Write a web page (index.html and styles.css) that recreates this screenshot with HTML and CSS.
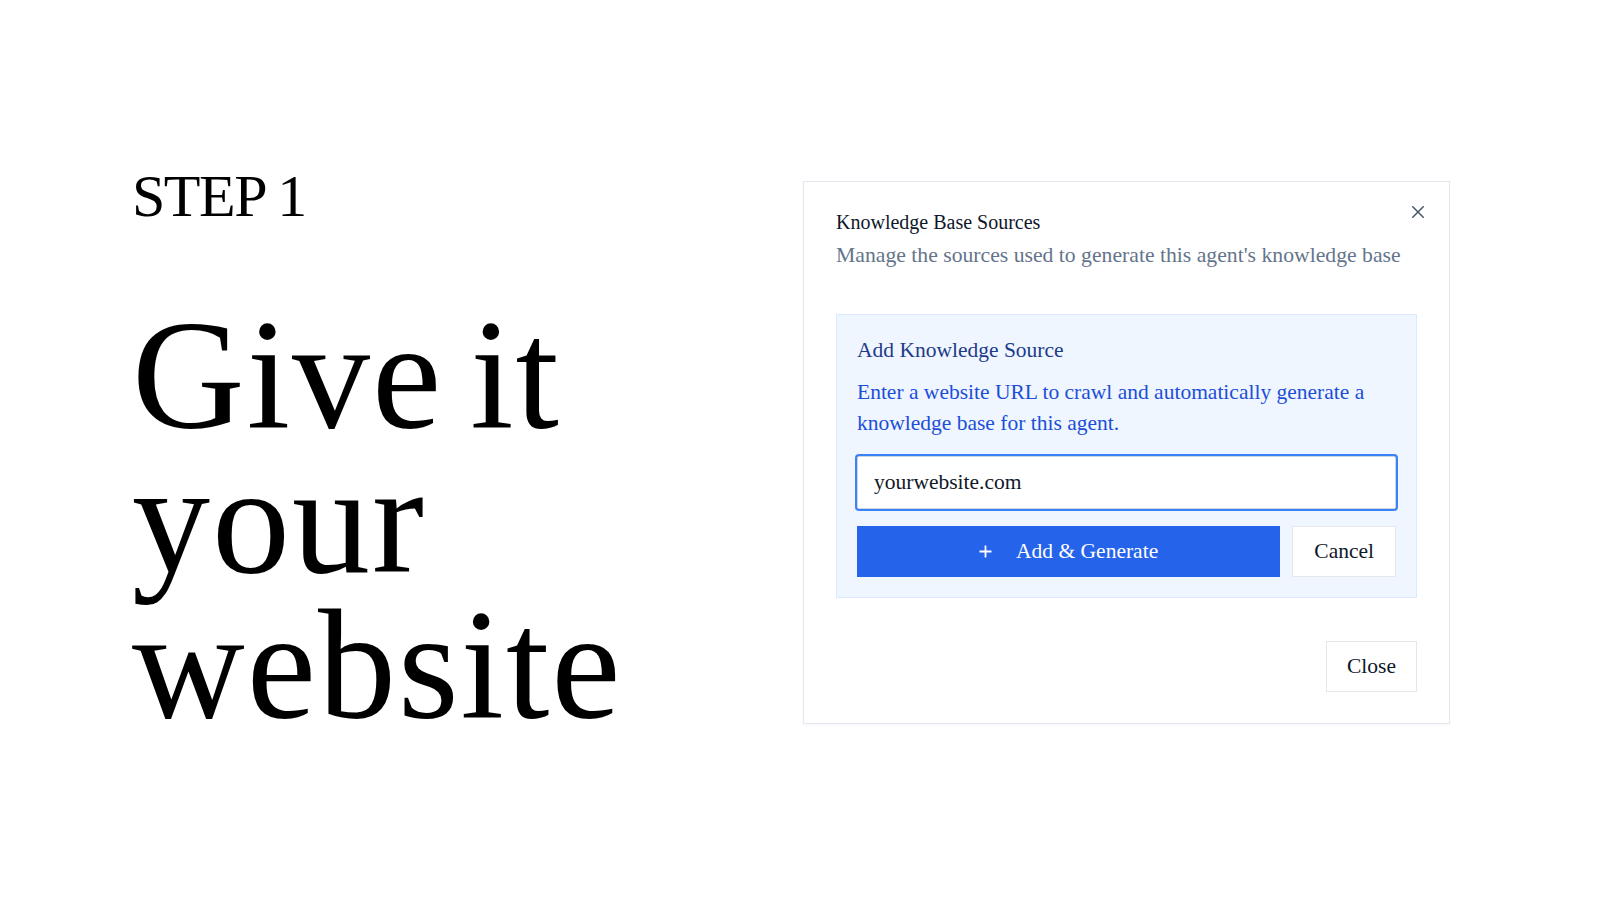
FILE: index.html
```html
<!DOCTYPE html>
<html lang="en">
<head>
    <meta charset="UTF-8">
    <meta name="viewport" content="width=device-width, initial-scale=1.0">
    <title>Step 1 - Give it your website</title>
    <link rel="stylesheet" href="styles.css">
</head>
<body>
    <main class="page">
        <section class="intro">
            <p class="step">STEP 1</p>
            <h1 class="headline">Give it<br>your<br>website</h1>
        </section>

        <div class="dialog">
            <button class="dialog-x" type="button" aria-label="Close">
                <svg width="12" height="12" viewBox="0 0 12 12">
                    <path d="M0.75 0.75 L11.25 11.25 M11.25 0.75 L0.75 11.25" stroke="#475569" stroke-width="1.5" stroke-linecap="round" fill="none"/>
                </svg>
            </button>
            <h2 class="dialog-title">Knowledge Base Sources</h2>
            <p class="dialog-subtitle">Manage the sources used to generate this agent's knowledge base</p>

            <div class="source-box">
                <h3 class="source-title">Add Knowledge Source</h3>
                <p class="source-desc">Enter a website URL to crawl and automatically generate a knowledge base for this agent.</p>
                <input class="url-input" type="text" value="yourwebsite.com">
                <div class="source-actions">
                    <button class="btn btn-primary" type="button">
                        <svg width="13" height="13" viewBox="0 0 13 13">
                            <path d="M6.5 0.5 V12.5 M0.5 6.5 H12.5" stroke="#fff" stroke-width="1.8" fill="none"/>
                        </svg>
                        Add &amp; Generate
                    </button>
                    <button class="btn btn-outline" type="button">Cancel</button>
                </div>
            </div>

            <div class="dialog-footer">
                <button class="btn btn-outline" type="button">Close</button>
            </div>
        </div>
    </main>
</body>
</html>
```

FILE: styles.css
```css
body {
    margin: 0;
    padding: 0;
    background-color: #fff;
    font-family: "Liberation Serif", "Times New Roman", serif;
    color: #000;
}
.page {
    height: 100vh;
    display: flex;
    align-items: center;
    justify-content: space-between;
    padding: 0 150px 0 132px;
    box-sizing: border-box;
}
.intro {
    display: flex;
    flex-direction: column;
    margin-top: 3px;
}
.step {
    margin: 0;
    font-size: 60px;
    line-height: 60px;
    letter-spacing: -1.5px;
    font-weight: normal;
}
.headline {
    margin: 76px 0 0;
    font-size: 156px;
    line-height: 145px;
    letter-spacing: 2px;
    word-spacing: -14px;
    font-weight: normal;
}
.dialog {
    position: relative;
    width: 647px;
    margin-top: 5px;
    box-sizing: border-box;
    padding: 26px 32px 31px;
    background: #fff;
    border: 1px solid #e2e8f0;
    box-shadow: 0 1px 3px rgba(15, 23, 42, 0.04);
}
.dialog-x {
    position: absolute;
    top: 14px;
    right: 15px;
    width: 32px;
    height: 32px;
    padding: 0;
    border: none;
    background: none;
    display: flex;
    align-items: center;
    justify-content: center;
    cursor: pointer;
}
.dialog-title {
    margin: 0;
    font-size: 20px;
    line-height: 28px;
    font-weight: normal;
    color: #0f172a;
}
.dialog-subtitle {
    margin: 4px 0 0;
    font-size: 21.7px;
    line-height: 30px;
    color: #64748b;
}
.source-box {
    margin-top: 44px;
    padding: 20px;
    background: #eff6ff;
    border: 1px solid #dbeafe;
}
.source-title {
    margin: 0;
    font-size: 21.5px;
    line-height: 30px;
    font-weight: normal;
    color: #1e3a8a;
}
.source-desc {
    margin: 12px 0 0;
    font-size: 21.5px;
    line-height: 30.5px;
    color: #1d4ed8;
}
.url-input {
    display: block;
    width: 100%;
    height: 53px;
    margin-top: 18px;
    box-sizing: border-box;
    padding: 0 16px;
    border: 1px solid #cbd5e1;
    border-radius: 2px;
    box-shadow: 0 0 0 2px #3b82f6;
    outline: none;
    background: #fff;
    font-family: inherit;
    font-size: 21.5px;
    color: #111827;
}
.source-actions {
    display: flex;
    gap: 12px;
    margin-top: 17px;
}
.btn {
    height: 51px;
    padding: 0 21px;
    font-family: inherit;
    font-size: 21.5px;
    cursor: pointer;
    display: flex;
    align-items: center;
    justify-content: center;
}
.btn-primary {
    flex: 1;
    gap: 24px;
    border: none;
    background-color: #2563eb;
    color: #fff;
}
.btn-outline {
    border: 1px solid #e5e7eb;
    background: #fff;
    color: #0f172a;
}
.dialog-footer {
    display: flex;
    justify-content: flex-end;
    margin-top: 43px;
}
.dialog-footer .btn {
    padding: 0 20px;
}
```
